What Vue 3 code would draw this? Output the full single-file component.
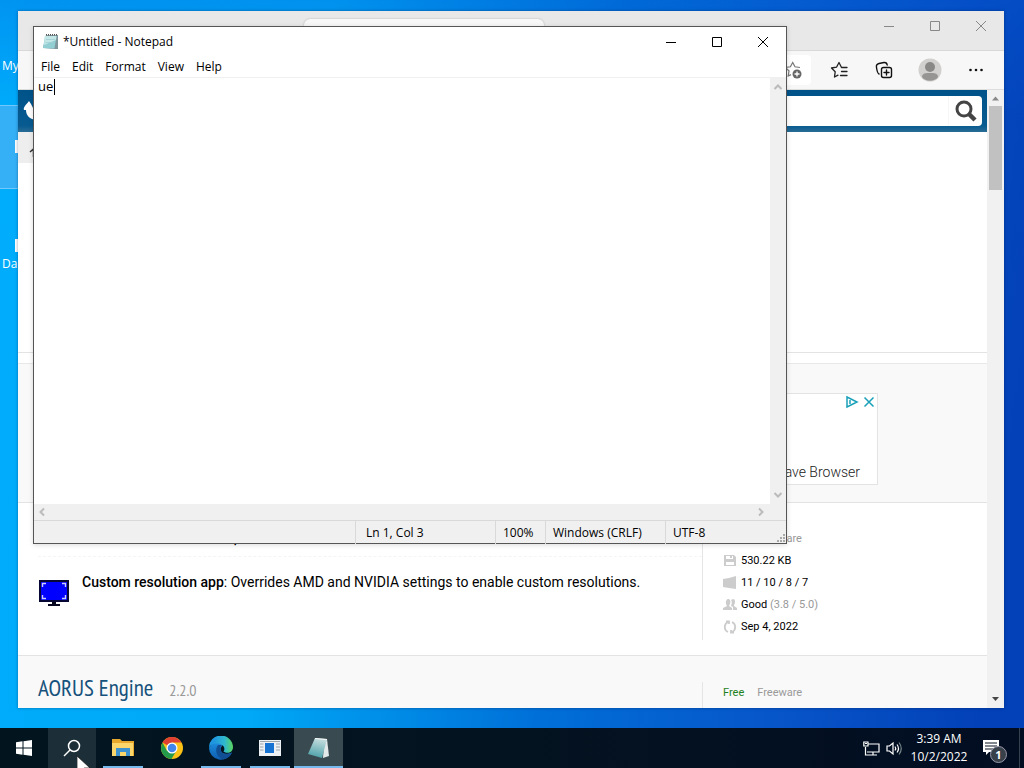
<script setup>
import { ref } from 'vue'

const note = ref('ue')
const search = ref('')
const menus = ['File', 'Edit', 'Format', 'View', 'Help']
const shortcuts = [
  { label: 'My', icon: false, selected: false },
  { label: '', icon: true, selected: true },
  { label: 'Da', icon: true, selected: false },
]
const facts = [
  { icon: 'disk', text: '530.22 KB', extra: '' },
  { icon: 'windows', text: '11 / 10 / 8 / 7', extra: '' },
  { icon: 'people', text: 'Good', extra: '(3.8 / 5.0)' },
  { icon: 'refresh', text: 'Sep 4, 2022', extra: '' },
]
</script>

<template>
  <div class="screen">
    <main class="desktop">
      <ul class="shortcuts">
        <li v-for="(s, i) in shortcuts" :key="i" :class="{ selected: s.selected }">
          <i v-if="s.icon" class="file"></i>
          <span>{{ s.label }}</span>
        </li>
      </ul>

      <section class="window browser" aria-label="Browser">
        <header class="tabs">
          <div class="tab"></div>
          <div class="controls">
            <button aria-label="Minimize"><svg width="12" height="12"><path d="M1 6.500H11" /></svg></button>
            <button aria-label="Maximize"><svg width="12" height="12"><path d="M1.500 1.500H10.500V10.500H1.500Z" /></svg></button>
            <button aria-label="Close"><svg width="12" height="12"><path d="M1 1L11 11M11 1L1 11" /></svg></button>
          </div>
        </header>
        <div class="toolbar">
          <div class="address">
            <button aria-label="Add to favorites">
              <svg width="20" height="20" viewBox="0 0 20 20" fill="none" stroke="#777">
                <path d="M17 7.500 12 6.800 9.700 2.500 7.400 6.800 2.500 7.500 6 11 5.200 16 8 14.600" stroke-width="1.200" />
                <circle cx="14" cy="14" r="4.500" fill="#666" stroke="none" />
                <path d="M14 11.500V16.500M11.500 14H16.500" stroke="#fff" stroke-width="1.300" />
              </svg>
            </button>
          </div>
          <button aria-label="Favorites">
            <svg width="20" height="20" viewBox="0 0 20 20" fill="none" stroke="#222" stroke-width="1.300" stroke-linecap="round" stroke-linejoin="round">
              <path d="M19 7.500H13.500L11 2.500 8.500 7.200 3.500 8 7.200 11.700 6.500 17 10 15.200M13.500 11.500H19M12.500 15.500H19" />
            </svg>
          </button>
          <button aria-label="Collections">
            <svg width="20" height="20" viewBox="0 0 20 20" fill="none" stroke="#111" stroke-width="1.400" stroke-linecap="round">
              <rect x="7.500" y="7.500" width="10" height="10" rx="2" />
              <path d="M12.500 10V15M10 12.500H15M5 14C3.500 13.500 3 11 2.500 7.500 2 5 3 4 5 3.500L10 2.500C12 2.300 13 3.500 13.200 5" />
            </svg>
          </button>
          <button aria-label="Profile">
            <svg width="24" height="24" viewBox="0 0 24 24">
              <circle cx="12" cy="12" r="11.500" fill="#d2d0ce" />
              <circle cx="12" cy="9" r="5" fill="#8a8886" />
              <path d="M4 19C4 15 8 15 12 15S20 15 20 19C17 24 7 24 4 19Z" fill="#979593" />
            </svg>
          </button>
          <button aria-label="Settings and more">
            <svg width="16" height="16" fill="#111"><circle cx="2.500" cy="8" r="1.300" /><circle cx="8" cy="8" r="1.300" /><circle cx="13.500" cy="8" r="1.300" /></svg>
          </button>
        </div>
        <div class="viewport">
          <div class="page">
            <div class="sitebar">
              <svg class="logo" width="30" height="22" viewBox="0 0 30 22"><path d="M6 1C3 5 0 7 1 10L3 10C3 15 6 19 13 20V6L10 8 8 4Z" fill="#fff" /></svg>
              <form class="find" @submit.prevent>
                <input v-model="search" type="text" aria-label="Search the site" />
                <button aria-label="Search">
                  <svg width="24" height="24" viewBox="0 0 24 24" fill="none" stroke="#444"><circle cx="10" cy="10" r="7" stroke-width="3" /><path d="M15 15 21 21" stroke-width="4.500" /></svg>
                </button>
              </form>
            </div>
            <div class="blank"><a href="#" class="home" aria-label="Home"><svg width="16" height="12"><path d="M12 6 15.500 3V11" fill="none" stroke="#333" stroke-width="1.500" /></svg></a></div>
            <div class="rule"></div>
            <div class="adband">
              <div class="ad">
                <div class="adtools">
                  <svg width="14" height="14" viewBox="0 0 14 14" fill="none" stroke="#18a0b8" stroke-width="1.500"><path d="M2 2 12 7 2 12ZM5 5V9" /></svg>
                  <svg width="12" height="14" viewBox="0 0 12 14" fill="none" stroke="#18a0b8" stroke-width="1.500"><path d="M1.500 2.500 10.500 11.500M10.500 2.500 1.500 11.500" /></svg>
                </div>
                <span>Brave Browser</span>
              </div>
            </div>
            <article class="entry">
              <div class="summary">
                <p class="tail"><b>,</b></p>
                <div class="description">
                  <svg width="30" height="28" viewBox="0 0 30 28">
                    <rect width="30" height="22" fill="#070735" /><rect x="2" y="2" width="26" height="18" fill="#00f" />
                    <path d="M3.500 7V3.500H7M23 3.500H26.500V7M3.500 15V18.500H7M23 18.500H26.500V15" fill="none" stroke="#ccf" stroke-width="1.400" />
                    <path d="M13 22H17V24H21V26H9V24H13Z" fill="#070720" />
                  </svg>
                  <p><b>Custom resolution app</b>: Overrides AMD and NVIDIA settings to enable custom resolutions.</p>
                </div>
              </div>
              <aside>
                <p class="license indent">Freeware</p>
                <ul class="facts">
                  <li v-for="f in facts" :key="f.icon">
                    <svg width="14" height="14" viewBox="0 0 14 14" fill="#ccc">
                      <path v-if="f.icon === 'disk'" fill-rule="evenodd" d="M1 1H11L13 3V12H1ZM3 2V5H10V2ZM3 8V11H11V8ZM7 2H9V4H7Z" />
                      <path v-if="f.icon === 'windows'" d="M0 3 6 2V7H0ZM6 2 13 0V7H6ZM0 7H6V12L0 11ZM6 7H13V13L6 12Z" />
                      <path v-if="f.icon === 'people'" d="M5 1C7 1 8 3 7 6L6 8 9 10V12H0V10L4 8C2 5 3 1 5 1ZM10 1C12 1 13 4 11 7V8L14 10V12H10V9L8 8C9 6 9 3 8 2Z" />
                      <path v-if="f.icon === 'refresh'" d="M5 2A5.500 5.500 0 0 0 5 12M9 2A5.500 5.500 0 0 1 9 12M3 1.500H6V4M11 12.500H8V10" fill="none" stroke="#ccc" stroke-width="1.800" />
                    </svg>
                    <span>{{ f.text }} <em v-if="f.extra">{{ f.extra }}</em></span>
                  </li>
                </ul>
              </aside>
            </article>
            <article class="entry next">
              <div class="summary heading"><h2><a href="#">AORUS Engine</a></h2><small>2.2.0</small></div>
              <aside>
                <p class="license"><strong>Free</strong><span>Freeware</span></p>
                <i class="disktop"></i>
              </aside>
            </article>
          </div>
          <div class="pagebar">
            <svg width="15" height="16"><path d="M4 10.500 7.500 6.500 11 10.500Z" fill="#888" /></svg>
            <i class="thumb"></i>
            <svg class="down" width="15" height="18"><path d="M4 7H11L7.500 11Z" fill="#444" /></svg>
          </div>
        </div>
      </section>

      <section class="window notepad" aria-label="Notepad">
        <header class="title">
          <svg width="18" height="18" viewBox="0 0 18 18">
            <path d="M5 2H17V16H14L2 15Z" fill="#7f979c" /><path d="M4 3H15.500L13.500 15.500 2 15Z" fill="#8fcfd4" /><path d="M4 3H15.500L15 7 3 12Z" fill="#c3e6e6" />
            <path d="M5 6.500H14M4.500 9.500H13.500M4 12.500H13" stroke="#9ccbd0" stroke-width=".7" /><path d="M5 1.700H16" stroke="#555" stroke-width="1.500" stroke-dasharray="1 1" />
          </svg>
          <h1>*Untitled - Notepad</h1>
          <div class="controls">
            <button aria-label="Minimize"><svg width="12" height="12"><path d="M1 6.500H11" /></svg></button>
            <button aria-label="Maximize"><svg width="12" height="12"><path d="M1.500 1.500H10.500V10.500H1.500Z" /></svg></button>
            <button aria-label="Close"><svg width="12" height="12"><path d="M1 1L11 11M11 1L1 11" /></svg></button>
          </div>
        </header>
        <nav class="menu"><button v-for="m in menus" :key="m">{{ m }}</button></nav>
        <div class="editor">
          <div class="sheet"><textarea v-model="note" aria-label="Text editor" spellcheck="false"></textarea><i class="caret"></i></div>
          <div class="vbar">
            <svg width="10" height="8"><path d="M1.500 6 5 2.500 8.500 6" /></svg>
            <svg width="10" height="8"><path d="M1.500 2 5 5.500 8.500 2" /></svg>
          </div>
          <div class="hbar">
            <svg width="8" height="10"><path d="M6 1.500 2.500 5 6 8.500" /></svg>
            <svg width="8" height="10"><path d="M2 1.500 5.500 5 2 8.500" /></svg>
          </div>
        </div>
        <footer class="status">
          <span></span><span class="position">Ln 1, Col 3</span><span>100%</span><span>Windows (CRLF)</span>
          <span class="encoding">UTF-8<svg width="10" height="10" fill="#aaa"><path d="M7 0H9V2H7ZM4 3H6V5H4ZM7 3H9V5H7ZM1 6H3V8H1ZM4 6H6V8H4ZM7 6H9V8H7Z" /></svg></span>
        </footer>
      </section>
    </main>

    <footer class="taskbar">
      <button class="system" aria-label="Start"><svg width="16" height="16" fill="#fff"><path d="M0 2.200 6.500 1.300V7.500H0ZM7.500 1.200 16 0V7.500H7.500ZM0 8.500H6.500V14.700L0 13.800ZM7.500 8.500H16V16L7.500 14.800Z" /></svg></button>
      <button class="system hover" aria-label="Search"><svg width="18" height="18" fill="none" stroke="#fff" stroke-width="1.500"><circle cx="11" cy="7" r="5.500" /><path d="M7 11 1 17" /></svg></button>
      <div class="apps">
        <button class="running" aria-label="File Explorer">
          <svg width="22" height="20" viewBox="0 0 22 20"><path d="M0 1H8L10 3H22V18H0Z" fill="#e6a92d" /><path d="M0 5H21V18H0Z" fill="#fbd66b" /><path d="M4 10H18V18H14V14H8V18H4Z" fill="#3d93cf" /></svg>
        </button>
        <button aria-label="Chrome">
          <svg width="24" height="24" viewBox="0 0 24 24"><circle cx="12" cy="12" r="11" fill="#fbc116" /><path d="M12 12 2.500 6.500A11 11 0 0 1 21.500 6.500H12Z" fill="#df4032" /><path d="M12 12 7 15 2.500 6.500A11 11 0 0 0 11.500 23L16.500 14.500Z" fill="#249b4b" /><circle cx="12" cy="12" r="5.500" fill="#fff" /><circle cx="12" cy="12" r="4.300" fill="#4285ec" /></svg>
        </button>
        <button class="running" aria-label="Edge">
          <svg width="24" height="24" viewBox="0 0 24 24">
            <defs>
              <linearGradient id="edgeTop"><stop offset=".2" stop-color="#1f96e0" /><stop offset=".65" stop-color="#2fb8cf" /><stop offset="1" stop-color="#5bd65c" /></linearGradient>
              <linearGradient id="edgeBase" x2="0" y2="1"><stop offset="0" stop-color="#1d8fe0" /><stop offset="1" stop-color="#0f5cad" /></linearGradient>
            </defs>
            <path d="M0 12A12 12 0 0 1 12 6C16 8 12 10 11.500 13 12 18 17 19 23 16.500A12 12 0 0 1 0 12Z" fill="url(#edgeBase)" />
            <path d="M9 9C5 14 8 21 14 23.500 18 23 21 20.500 23 16.500 17 19.500 12 18 11.500 13 11 11 12 10 13 9Z" fill="#114f94" />
            <path d="M0 12A12 12 0 0 1 24 11C24 17 18 18 14.500 15.500 17 12 14 7.500 8 7.500 4 7.500 1 9 0 12Z" fill="url(#edgeTop)" />
          </svg>
        </button>
        <button class="running" aria-label="Viewer">
          <svg width="22" height="16" viewBox="0 0 22 16"><path d="M0 0H22V16H0Z" fill="#edf1f4" /><path d="M6 3H15V13H6Z" fill="#1673d1" /><path d="M1 4H4.500M1 7H4.500M1 10H4.500M17 4H21M17 7H21M17 10H21M1 1.500H21" stroke="#9aa5ad" /></svg>
        </button>
        <button class="running active" aria-label="Notepad">
          <svg width="24" height="24" viewBox="0 0 24 24">
            <defs><linearGradient id="notePage" x1=".6" x2=".4" y2="1"><stop offset="0" stop-color="#c9dfe0" /><stop offset="1" stop-color="#4aa0a8" /></linearGradient></defs>
            <path d="M20 3 22 20 16 22 17 8Z" fill="#e3e9e9" /><path d="M8 2 20 3 15 22 1 18Z" fill="url(#notePage)" /><path d="M8 2 20 3V4L8 3Z" fill="#f4f4f4" />
          </svg>
        </button>
      </div>
      <div class="tray">
        <svg width="17" height="15" fill="none" stroke="#fff" stroke-width="1.200"><path d="M5 3H16V11H4M10 11V14M6 14H14M2.500 6V14H6M.8 1H5V5H.8ZM2 2.500H4" /></svg>
        <svg width="17" height="15" fill="none" stroke="#fff" stroke-width="1.200"><path d="M1 5H3.500L7 2V13L3.500 10H1Z" /><path d="M9 5.500Q10.500 7.500 9 9.500M11 3.500Q14 7.500 11 11.500" /><path d="M13 1.500Q17.500 7.500 13 13.500" stroke="#788" /></svg>
        <time><span>3:39 AM</span><span>10/2/2022</span></time>
        <button class="notices" aria-label="Notifications">
          <svg width="16" height="16" viewBox="0 0 16 16"><path d="M0 0H16V12H6L3 15V12H0Z" fill="#fff" /><path d="M2 3H14M2 6H14M2 9H12" stroke="#06101c" /></svg>
          <b>1</b>
        </button>
      </div>
    </footer>
    <svg class="pointer" width="14" height="20" viewBox="0 0 14 20"><path d="M0 0V17L4 13 7 20 10 19 7 12H13Z" fill="#fff" stroke="#111" stroke-width=".7" /></svg>
  </div>
</template>

<style>
body { margin: 0; overflow: hidden; }
</style>

<style scoped>
* { box-sizing: border-box; }
.screen { position: relative; height: 100vh; display: flex; flex-direction: column; overflow: hidden; font: 12px/16px "Open Sans", "Noto Sans", sans-serif; color: #000; }
button { padding: 0; border: 0; background: none; font: inherit; color: inherit; display: flex; align-items: center; justify-content: center; }
svg { display: block; flex: none; }
h1, h2, p, ul { margin: 0; padding: 0; font: inherit; list-style: none; }
a { text-decoration: none; }
.desktop { flex: 1; position: relative; overflow: hidden; background: linear-gradient(180deg, rgba(0, 90, 215, .3), transparent 16%), linear-gradient(97deg, #00adfc 0%, #00a9f7 30%, #0070d8 56%, #0757ca 76%, #0341b8 96%); }
.shortcuts { display: flex; flex-direction: column; gap: 15px; padding-top: 6px; width: 76px; }
.shortcuts li { height: 84px; padding: 51px 0 0 2px; color: #fff; position: relative; border: 1px solid transparent; border-left: 0; }
.shortcuts .selected { background: #35b0f7; border-color: #70c8fb; }
.file { position: absolute; left: 15px; top: 34px; width: 32px; height: 13px; background: #fff; }
.window { position: absolute; display: flex; flex-direction: column; }
.controls { display: flex; margin-left: auto; }
.controls button { width: 46px; height: 29px; }
.controls svg { fill: none; stroke: currentColor; }
.browser { inset: 11px 20px 20px 18px; background: #fff; font-family: Roboto, sans-serif; box-shadow: 0 0 3px rgba(0, 20, 60, .4); }
.tabs { height: 40px; flex: none; display: flex; background: #e8e8e8; border-bottom: 1px solid #d8d8d8; color: #888; }
.tab { width: 240px; margin: 8px 0 0 286px; background: #f7f7f7; border-radius: 6px 6px 0 0; box-shadow: 0 0 2px #aaa; }
.toolbar { height: 39px; flex: none; display: flex; align-items: center; padding-right: 5px; background: #f7f7f7; border-bottom: 1px solid #ddd; }
.toolbar button { width: 46px; height: 30px; }
.toolbar .address { flex: 1; height: 30px; margin: 0 4px 0 90px; display: flex; justify-content: flex-end; background: #fff; border-radius: 4px; }
.toolbar .address button { width: 36px; }
.viewport { flex: 1; min-height: 0; display: flex; }
.page { flex: 1; min-width: 0; overflow: hidden; display: flex; flex-direction: column; }
.page > * { flex: none; }
.sitebar { height: 42px; background: linear-gradient(#005389, #075b91 85%, #2a6b94); display: flex; align-items: center; justify-content: space-between; padding: 0 5px; }
.find { width: 70%; height: 30px; display: flex; background: #fff; border-radius: 4px; }
.find input { flex: 1; min-width: 0; border: 0; background: none; outline: 0; }
.find button { width: 34px; border-left: 1px solid #f7f7f7; }
.blank { height: 221px; border-bottom: 1px solid #e3e3e3; }
.home { display: flex; align-items: center; justify-content: flex-start; width: 29px; height: 31px; padding: 8px 0 0 0; background: #eee; }
.rule { height: 10px; }
.adband { height: 139px; padding: 29px 109px 0 0; display: flex; justify-content: flex-end; align-items: flex-start; background: #f9f9f9; border-top: 1px solid #e8e8e8; }
.ad { width: 300px; height: 92px; display: flex; flex-direction: column; justify-content: space-between; align-items: flex-end; padding: 1px 2px 3px; border: 1px solid #e3e3e3; background: #fff; }
.ad span { font: 300 14px/18px Roboto, sans-serif; margin-right: 15px; color: #222; }
.adtools { display: flex; gap: 4px; }
.entry { display: grid; grid-template-columns: minmax(0, 1fr) 285px; border-top: 1px solid #e3e3e3; height: 153px; padding: 16px 0 15px 20px; background: #fff; }
.summary { display: flex; flex-direction: column; min-width: 0; }
.tail { font-size: 14px; line-height: 16px; padding: 11px 0 0 196px; height: 38px; border-bottom: 1px dashed #f5f5f5; }
.description { display: flex; gap: 13px; align-items: flex-start; padding: 14px 0 0 1px; font-size: 14px; line-height: 22px; }
.description svg { margin-top: 9px; }
.description b { font-weight: 500; }
aside { border-left: 1px solid #e5e5e5; padding-left: 20px; font-size: 11px; line-height: 22px; }
.license { color: #999; display: flex; gap: 13px; margin-top: 9px; }
.license strong { color: #1c8220; font-weight: 400; }
.indent { padding-left: 34px; }
.facts li { display: flex; align-items: center; gap: 4px; height: 22px; }
.facts em { font-style: normal; color: #999; }
.next { height: 60px; padding-top: 26px; padding-bottom: 0; background: #f9f9f9; }
.next .license { margin-top: 0; line-height: 22px; }
.disktop { display: block; width: 12px; height: 8px; margin-top: 4px; background: #bcd3e4; }
.heading { flex-direction: row; gap: 16px; align-items: baseline; }
.heading h2 { font: 23px/12px "PT Sans Narrow", Lato, sans-serif; }
.heading a { color: #16527c; }
.heading small { font: 16px/12px "PT Sans Narrow", Lato, sans-serif; color: #999; }
.pagebar { width: 17px; padding: 0 1px; display: flex; flex-direction: column; background: #f1f1f1; }
.thumb { width: 13px; height: 84px; margin-left: 1px; background: #c1c1c1; }
.down { margin-top: auto; }
.notepad { inset: 26px 237px 184px 33px; background: #fff; border: 1px solid #555; box-shadow: 0 1px 5px rgba(0, 0, 0, .15); }
.title { height: 30px; flex: none; display: flex; align-items: center; padding-left: 7px; gap: 4px; }
.menu { height: 20px; flex: none; display: flex; padding-left: 1px; }
.menu button { padding: 0 6px; }
.editor { flex: 1; min-height: 0; display: grid; grid-template: minmax(0, 1fr) 16px / minmax(0, 1fr) 16px; border-top: 1px solid #f0f0f0; }
.sheet { position: relative; display: flex; }
.sheet textarea { flex: 1; border: 0; outline: 0; resize: none; overflow: hidden; padding: 0 4px; font: 13px/16px "Open Sans", sans-serif; color: #000; }
.caret { position: absolute; left: 20px; top: 1px; width: 1px; height: 16px; background: #000; }
.vbar, .hbar { display: flex; justify-content: space-between; align-items: center; background: #f0f0f0; }
.vbar { flex-direction: column; padding: 5px 0; }
.hbar { grid-column: 1 / -1; padding: 0 21px 0 4px; }
.vbar svg, .hbar svg { fill: none; stroke: #bbb; stroke-width: 2; }
.status { height: 23px; flex: none; display: grid; grid-template-columns: minmax(0, 1fr) 140px 50px 120px 121px; background: #f0f0f0; border-top: 1px solid #d9d9d9; line-height: 23px; }
.status span { padding-left: 7px; border-left: 1px solid #d9d9d9; white-space: nowrap; }
.status span:first-child { border: 0; }
.status .position { padding-left: 10px; }
.encoding { display: flex; justify-content: space-between; align-items: flex-end; }
.taskbar { height: 40px; flex: none; display: flex; background: linear-gradient(90deg, #02151f, #041320 50%, #020d22); color: #fff; }
.system { width: 48px; }
.hover { background: #1c2f38; }
.apps { display: flex; margin-left: 2px; }
.apps button { position: relative; width: 49px; }
.running::after { content: ""; position: absolute; left: 5px; right: 4px; bottom: 0; height: 2px; background: #76b9ed; }
.apps .active { background: #3a4a51; }
.active::after { left: 0; right: 0; }
.tray { margin-left: auto; display: flex; align-items: center; gap: 6px; margin-right: 4px; border-right: 1px solid #37424f; }
time { display: flex; flex-direction: column; align-items: center; line-height: 18px; width: 58px; margin-left: 1px; }
.notices { position: relative; width: 45px; height: 40px; padding-right: 11px; }
.notices b { position: absolute; left: 16px; top: 18px; width: 17px; height: 17px; border: 1px solid #99a; border-radius: 50%; background: #38404a; font-size: 11px; line-height: 15px; }
.pointer { position: absolute; left: 77px; bottom: -8px; }
</style>
